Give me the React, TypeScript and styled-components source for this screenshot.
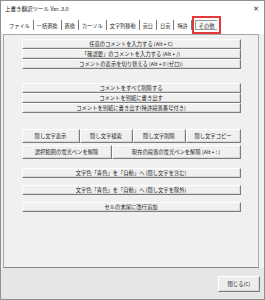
import React from 'react';
import styled, { createGlobalStyle } from 'styled-components';

const GlobalStyle = createGlobalStyle`
  html, body {
    margin: 0;
    padding: 0;
    background: #ffffff;
  }
  * {
    box-sizing: border-box;
  }
`;

const Window = styled.div`
  display: flex;
  flex-direction: column;
  width: 265px;
  height: 300px;
  border: 1px solid #8f8f8f;
  background: #f0f0f0;
  font-family: 'Noto Sans CJK JP', 'Noto Sans', sans-serif;
  color: #1a1a1a;
  overflow: hidden;
`;

const TitleBar = styled.div`
  display: flex;
  align-items: center;
  justify-content: space-between;
  height: 15px;
  padding: 0 5px 0 4px;
  background: #ffffff;
  font-size: 5.5px;
`;

const Close = styled.span`
  font-family: 'DejaVu Sans', sans-serif;
  font-size: 7px;
  color: #333;
`;

const TabStrip = styled.div`
  display: flex;
  align-items: center;
  height: 18px;
  padding: 0 0 0 5px;
  background: #ffffff;
`;

const Tab = styled.div<{ $active?: boolean }>`
  position: relative;
  display: flex;
  align-items: center;
  height: 10px;
  padding: 0 3px;
  font-size: 5.2px;
  white-space: nowrap;
  border-right: 1px solid #7a7a7a;
  &:last-child {
    border-right: none;
  }
  ${(p) =>
    p.$active &&
    `
    margin-left: 3px;
    padding: 0 3px;
    background: #f7f7f7;
    border: 1px solid #9a9a9a;
    &::after {
      content: '';
      position: absolute;
      left: -4px;
      right: -4px;
      top: -5px;
      bottom: -5px;
      border: 2px solid #e23a3a;
    }
  `}
`;

const Body = styled.div`
  display: flex;
  flex: 1;
  padding: 0 5px 0 2px;
`;

const Panel = styled.div`
  display: flex;
  flex-direction: column;
  align-items: center;
  flex: 1;
  border: 1px solid #a8a8a8;
  border-bottom-color: #8a8a8a;
  background: #f0f0f0;
  padding-top: 4px;
`;

const Group = styled.div<{ $gap?: number; $top?: number }>`
  display: flex;
  flex-direction: column;
  width: 219px;
  gap: ${(p) => p.$gap ?? 0}px;
  margin-top: ${(p) => p.$top ?? 0}px;
`;

const Row = styled.div`
  display: flex;
`;

const Button = styled.div<{ $w?: number; $h?: number }>`
  display: flex;
  align-items: center;
  justify-content: center;
  height: ${(p) => p.$h ?? 14}px;
  width: ${(p) => (p.$w ? `${p.$w}px` : 'auto')};
  flex: ${(p) => (p.$w ? 'none' : 1)};
  background: #f0f0f0;
  border-top: 1px solid #ffffff;
  border-left: 1px solid #ffffff;
  border-right: 1px solid #7c7c7c;
  border-bottom: 1px solid #7c7c7c;
  box-shadow: inset -1px -1px 0 #d8d8d8;
  font-size: 5.3px;
  white-space: nowrap;
`;

const Footer = styled.div`
  display: flex;
  justify-content: flex-end;
  align-items: center;
  height: 31px;
  padding-right: 4px;
  background: #e6e6e6;
`;

const CloseButton = styled(Button)`
  width: 42px;
  height: 16px;
  flex: none;
  background: #ededed;
`;

const tabs = ['ファイル', '一括置換', '置換', 'カーソル', '文字列移動', '英日', '日英', '特許'];

export default function App() {
  return (
    <>
      <GlobalStyle />
      <Window>
        <TitleBar>
          <span>上書き翻訳ツール Ver. 3.0</span>
          <Close>✕</Close>
        </TitleBar>
        <TabStrip>
          {tabs.map((t) => (
            <Tab key={t}>{t}</Tab>
          ))}
          <Tab $active>その他</Tab>
        </TabStrip>
        <Body>
          <Panel>
            <Group>
              <Button>任意のコメントを入力する (Alt + C)</Button>
              <Button>「確認要」のコメントを入力する (Alt + /)</Button>
              <Button>コメントの表示を切り替える (Alt + 0 (ゼロ))</Button>
            </Group>
            <Group $top={14}>
              <Button>コメントをすべて削除する</Button>
              <Button>コメントを別紙に書き出す</Button>
              <Button>コメントを別紙に書き出す(特許段落番号付き)</Button>
            </Group>
            <Group $top={16} $gap={2}>
              <Row>
                <Button $w={58}>隠し文字表示</Button>
                <Button $w={53}>隠し文字検索</Button>
                <Button $w={53}>隠し文字削除</Button>
                <Button>隠し文字コピー</Button>
              </Row>
              <Row>
                <Button $w={90}>選択範囲の蛍光ペンを解除</Button>
                <Button>現在の段落の蛍光ペンを解除 (Alt + : )</Button>
              </Row>
            </Group>
            <Group $top={9} $gap={7}>
              <Button>文字色「青色」を「自動」へ (隠し文字を含む)</Button>
              <Button>文字色「青色」を「自動」へ (隠し文字を除外)</Button>
              <Button>セルの末尾に改行追加</Button>
            </Group>
          </Panel>
        </Body>
        <Footer>
          <CloseButton>閉じる(C)</CloseButton>
        </Footer>
      </Window>
    </>
  );
}
